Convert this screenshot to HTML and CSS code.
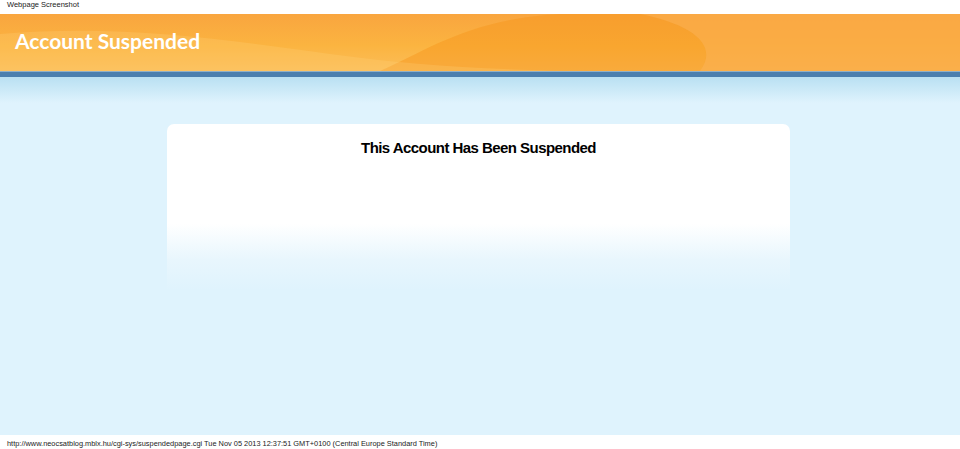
FILE: index.html
```html
<!DOCTYPE html>
<html lang="en">
<head>
    <meta charset="UTF-8">
    <title>Account Suspended</title>
    <link rel="stylesheet" href="styles.css">
</head>
<body>
    <div class="caption">Webpage Screenshot</div>

    <!-- Header -->
    <div class="header">
        <svg class="waves" viewBox="0 0 960 57" preserveAspectRatio="none">
            <path d="M380 57 C430 35 470 5 560 0 L960 0 L960 57 Z" fill="#f7941a" opacity="0.45"/>
            <path d="M0 20 C120 10 220 25 330 40 C420 52 500 57 620 57 L0 57 Z" fill="#ffd27a" opacity="0.25"/>
            <path d="M640 0 L960 0 L960 57 L700 57 C720 30 690 10 640 0 Z" fill="#fbb45a" opacity="0.5"/>
        </svg>
        <h1>Account Suspended</h1>
    </div>
    <div class="stripe"></div>

    <!-- Content -->
    <div class="main">
        <div class="card">
            <h2>This Account Has Been Suspended</h2>
        </div>
    </div>

    <div class="footer">http://www.neocsatblog.mblx.hu/cgi-sys/suspendedpage.cgi Tue Nov 05 2013 12:37:51 GMT+0100 (Central Europe Standard Time)</div>
</body>
</html>
```

FILE: styles.css
```css
html, body {
    height: 100%;
}
body {
    margin: 0;
    font-family: "Liberation Sans", Arial, sans-serif;
    background-color: #dff3fd;
    display: flex;
    flex-direction: column;
}

.caption {
    background: #fff;
    height: 14px;
    font-size: 7.5px;
    line-height: 9px;
    padding-left: 7px;
    color: #222;
}

/* Header */
.header {
    position: relative;
    height: 57px;
    background: linear-gradient(to bottom, #f9a53f 0%, #fbb440 55%, #fbbd58 100%);
    overflow: hidden;
}
.waves {
    position: absolute;
    top: 0;
    left: 0;
    width: 100%;
    height: 100%;
}
.header h1 {
    position: relative;
    margin: 0;
    padding: 14px 0 0 15px;
    font-family: Lato, sans-serif;
    font-size: 21px;
    font-weight: bold;
    color: #fff;
}
.stripe {
    height: 5px;
    background: #4b7fae;
    border-top: 1px solid #8fb0c8;
}

/* Content */
.main {
    flex: 1;
    background: linear-gradient(to bottom, #b9e0f2 0px, #dff3fd 26px);
    padding-top: 47px;
}
.card {
    width: 623px;
    height: 166px;
    margin-left: 167px;
    border-radius: 7px 7px 0 0;
    background: linear-gradient(to bottom, #fff 0%, #fff 60%, #e8f6fd 82%, #dff3fd 100%);
}
.card h2 {
    margin: 0;
    padding-top: 15px;
    text-align: center;
    font-size: 15px;
    letter-spacing: -0.55px;
    color: #000;
}

.footer {
    background: #fff;
    height: 14px;
    font-size: 7.4px;
    line-height: 17px;
    padding-left: 7px;
    color: #222;
}
```
